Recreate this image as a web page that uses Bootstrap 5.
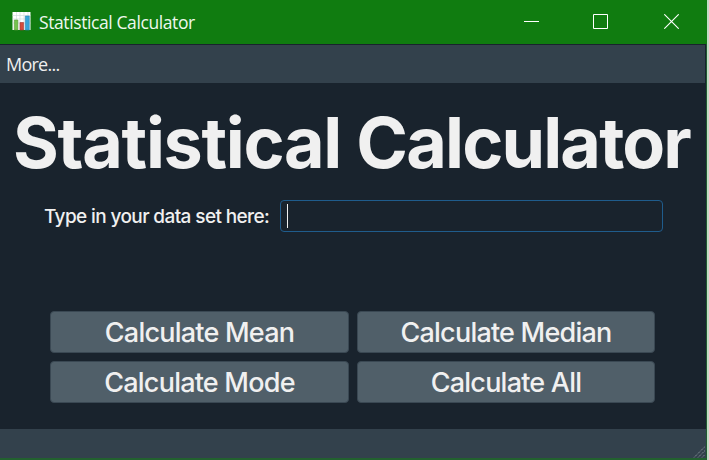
<!DOCTYPE html>
<html lang="en">
<head>
<meta charset="utf-8">
<meta name="viewport" content="width=device-width, initial-scale=1">
<title>Statistical Calculator</title>
<link href="https://cdn.jsdelivr.net/npm/bootstrap@5.3.0/dist/css/bootstrap.min.css" rel="stylesheet">
<style>
body{background:#c5dcc6;height:460px;overflow:hidden;font-family:"Inter",sans-serif}
.window{width:707px;height:460px;background:#19232d;border-right:1px solid #1f5a2f;border-bottom:2px solid #22612f}
.titlebar{height:44px;background:#107c10;width:707px;margin-right:-1px;padding-left:12px;color:#eef8ee;font:17.5px "Open Sans",sans-serif}
.app-icon{margin-bottom:1px}
.title-text{letter-spacing:-.4px;margin-left:8px;line-height:44px}
.controls{gap:54px;margin-right:28px;padding-bottom:1px}
.close-icon{margin-left:2px}
.menubar{height:38px;margin:1px 1px 0 0;background:#33414c;padding-left:6px;color:#eee;font:18px/38px "Open Sans",sans-serif}
.menu-text{letter-spacing:-.75px}
.content{height:346px;color:#f0f0f0}
.heading{font-size:70px;font-weight:700;line-height:84px;letter-spacing:-1.3px;margin:18px 0 0 13px;white-space:nowrap}
.heading span{letter-spacing:-1.85px}
.entry{margin:15px 0 0 44px;height:32px}
.entry label{width:236px;padding-top:2px;font-size:19px;font-weight:500;letter-spacing:-.61px;white-space:nowrap}
.data-field{width:383px;height:32px;border:1px solid #1f5c8c;border-radius:4px;padding:3px 6px}
.caret{width:1px;height:24px;background:#f0f0f0}
.keys{display:grid;grid-template-columns:299px 298px;gap:8px;margin:79px 0 0 50px}
.keys .btn{height:42px;padding:2px 0 0;border:1px solid #3a4853;border-radius:4px;background:#505f69;color:#f0f0f0;font-size:27px;font-weight:500;line-height:38px;letter-spacing:-.78px}
.statusbar{height:29px;background:#33414c}
</style>
<script src="https://cdn.jsdelivr.net/npm/bootstrap@5.3.0/dist/js/bootstrap.bundle.min.js"></script>
</head>
<body>
<div class="window d-flex flex-column">
  <header class="titlebar d-flex align-items-center flex-shrink-0">
    <svg class="app-icon" width="19" height="19" viewBox="0 0 19 19"><path fill="#fff" d="M.5 0h18v18H.5z"/><path d="M.5 3.5h18M.5 7h18M.5 11h18M4.500 0v18M8 0v18M12 0v18M16 0v18" stroke="#c9d9d8" stroke-width=".6"/><path fill="#74c34d" stroke="#5a993b" stroke-width=".6" d="M2.300 8h3.600v10H2.300z"/><path fill="#d44b3c" stroke="#a33b30" stroke-width=".6" d="M8 10.500h3.600V18H8z"/><path fill="#36a5d8" stroke="#2a84b5" stroke-width=".6" d="M13.300 4h4v14h-4z"/></svg>
    <span class="title-text">Statistical Calculator</span>
    <div class="controls d-flex ms-auto">
      <svg width="15" height="15"><path d="M0 7.500h15" stroke="#fff"/></svg>
      <svg width="15" height="15"><path d="M.5.5h14v14H.5z" fill="none" stroke="#fff"/></svg>
      <svg class="close-icon" width="15" height="15"><path d="M.3.3l14.400 14.400M14.700.3L.3 14.700" stroke="#fff" stroke-width="1.100"/></svg>
    </div>
  </header>
  <nav class="menubar flex-shrink-0"><span class="menu-text">More...</span></nav>
  <main class="content flex-shrink-0">
    <h1 class="heading">Statistical <span>Calculator</span></h1>
    <div class="entry d-flex align-items-center">
      <label>Type in your data set here:</label>
      <div class="data-field" role="textbox"><div class="caret"></div></div>
    </div>
    <div class="keys">
      <button class="btn">Calculate Mean</button>
      <button class="btn">Calculate Median</button>
      <button class="btn">Calculate Mode</button>
      <button class="btn">Calculate All</button>
    </div>
  </main>
  <footer class="statusbar d-flex justify-content-end align-items-end">
    <svg width="13" height="12"><path d="M1 11.500L12 .5M5 11.500L12 4.500M9 11.500l3-3" stroke="#7d8991" stroke-dasharray="1.500 .6"/></svg>
  </footer>
</div>
</body>
</html>
